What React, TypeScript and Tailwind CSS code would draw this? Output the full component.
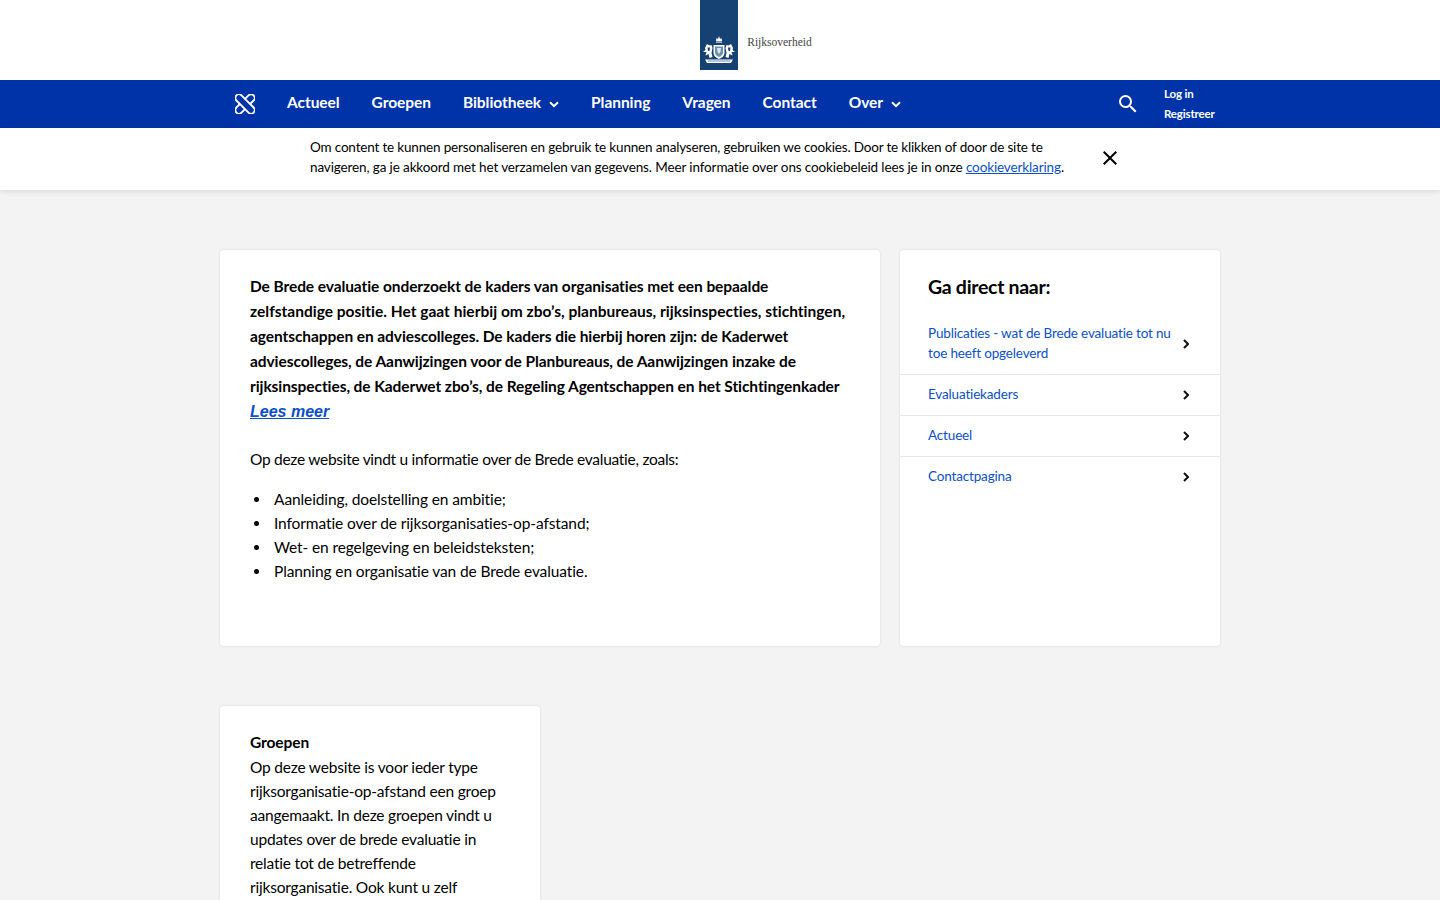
import { MdSearch, MdClose } from "react-icons/md";

const NAV = [
  { label: "Actueel" },
  { label: "Groepen" },
  { label: "Bibliotheek", caret: true },
  { label: "Planning" },
  { label: "Vragen" },
  { label: "Contact" },
  { label: "Over", caret: true },
];

const LINKS = [
  ["Publicaties - wat de Brede evaluatie tot nu", "toe heeft opgeleverd"],
  ["Evaluatiekaders"],
  ["Actueel"],
  ["Contactpagina"],
];

const INTRO = [
  "De Brede evaluatie onderzoekt de kaders van organisaties met een bepaalde",
  "zelfstandige positie. Het gaat hierbij om zbo’s, planbureaus, rijksinspecties, stichtingen,",
  "agentschappen en adviescolleges. De kaders die hierbij horen zijn: de Kaderwet",
  "adviescolleges, de Aanwijzingen voor de Planbureaus, de Aanwijzingen inzake de",
  "rijksinspecties, de Kaderwet zbo’s, de Regeling Agentschappen en het Stichtingenkader",
];

const BULLETS = [
  "Aanleiding, doelstelling en ambitie;",
  "Informatie over de rijksorganisaties-op-afstand;",
  "Wet- en regelgeving en beleidsteksten;",
  "Planning en organisatie van de Brede evaluatie.",
];

const GROEPEN = [
  "Op deze website is voor ieder type",
  "rijksorganisatie-op-afstand een groep",
  "aangemaakt. In deze groepen vindt u",
  "updates over de brede evaluatie in",
  "relatie tot de betreffende",
  "rijksorganisatie. Ook kunt u zelf",
];

function Logo() {
  return (
    <div className="flex items-end">
      <div className="w-[38px] h-[70px] bg-[#154273] flex items-end justify-center pb-[6px]">
        <svg width="34" height="29" viewBox="0 0 34 29" fill="#fff">
          {/* crown */}
          <path d="M14 6 L14.5 3 L16 4 L17 1 L18 4 L19.5 3 L20 6 Z" />
          <rect x="14" y="6.6" width="6" height="1" />
          {/* shield */}
          <path d="M11.5 10 H22.5 V18 C22.5 21 20 23 17 24 C14 23 11.5 21 11.5 18 Z" />
          <path d="M13 11.5 H21 V17.5 C21 19.8 19 21 17 22 C15 21 13 19.8 13 17.5 Z" fill="#6f8fb0" />
          <path d="M15 13 L19 13 L18.4 17 L17 19 L15.6 17 Z" fill="#dfe7ef" />
          {/* lions */}
          <path d="M3 13 L5 9 L7.5 10.5 L9.5 10 L10.5 13 L9.5 18 L10.5 22 L7.5 23 L6.5 19 L3.5 20.5 L4.5 17 L1 17 L3.5 15 Z" />
          <path d="M5.5 12.5 L8 12.5 L7.5 16 L6 16 Z" fill="#154273" />
          <path d="M31 13 L29 9 L26.5 10.5 L24.5 10 L23.5 13 L24.5 18 L23.5 22 L26.5 23 L27.5 19 L30.5 20.5 L29.5 17 L33 17 L30.5 15 Z" />
          <path d="M28.5 12.5 L26 12.5 L26.5 16 L28 16 Z" fill="#154273" />
          {/* ribbon */}
          <path d="M3 24.5 H31 L29 28 H5 Z" />
          <path d="M6 26 H28" stroke="#154273" strokeWidth="0.6" />
        </svg>
      </div>
      <span className="ml-[9px] mb-[21px] text-[11.5px] leading-[14px] text-[#444] whitespace-nowrap font-['Liberation_Serif',serif]">
        Rijksoverheid
      </span>
    </div>
  );
}

// two rounded bands, one passing over the other
function NavMark() {
  return (
    <svg width="20" height="20" viewBox="0 0 20 20" fill="#0033a8" stroke="#fff" strokeWidth="1.8" strokeLinejoin="round">
      <path d="M13.5 1.4 L1.4 13.5 A3.6 3.6 0 0 0 6.5 18.6 L18.6 6.5 A3.6 3.6 0 0 0 13.5 1.4 Z" />
      <path d="M6.5 1.4 L18.6 13.5 A3.6 3.6 0 0 1 13.5 18.6 L1.4 6.5 A3.6 3.6 0 0 1 6.5 1.4 Z" />
    </svg>
  );
}

function Caret() {
  return (
    <svg width="10" height="7" viewBox="0 0 10 7" fill="none" stroke="#fff" strokeWidth="2" className="ml-[8px] mt-[3px]">
      <path d="M1 1.2 L5 5.2 L9 1.2" />
    </svg>
  );
}

function Chevron() {
  return (
    <svg width="6" height="10" viewBox="0 0 6 10" fill="none" stroke="#111" strokeWidth="2" className="shrink-0 mt-[2px]">
      <path d="M1 1 L5 5 L1 9" />
    </svg>
  );
}

function Card({ className, children }: { className: string; children: React.ReactNode }) {
  return (
    <div className={`bg-white rounded-[4px] shadow-[0_0_3px_rgba(0,0,0,0.1)] ${className}`}>
      {children}
    </div>
  );
}

export default function App() {
  return (
    <div className="h-[900px] overflow-hidden bg-[#f3f3f3] text-black font-['Lato',sans-serif] whitespace-nowrap">
      <header className="h-[80px] bg-white flex justify-center">
        <div className="ml-[72px] h-[70px]">
          <Logo />
        </div>
      </header>

      <nav className="h-[48px] bg-[#0033a8] text-white">
        <div className="w-[1000px] mx-auto h-full flex items-center pl-[15px]">
          <NavMark />
          <ul className="flex items-center gap-8 ml-[32px] -mt-[2px] text-[15.5px] font-bold tracking-[-0.05px]">
            {NAV.map((n) => (
              <li key={n.label} className="flex items-center">
                {n.label}
                {n.caret && <Caret />}
              </li>
            ))}
          </ul>
          <div className="ml-auto flex items-center">
            <MdSearch size={24} className="mr-[24px]" />
            <div className="w-[56px] text-[11.5px] leading-[20px] font-bold tracking-[-0.15px]">
              <div>Log in</div>
              <div>Registreer</div>
            </div>
          </div>
        </div>
      </nav>

      <div className="h-[62px] bg-white shadow-[0_1px_6px_rgba(0,0,0,0.12)] flex items-center relative">
        <div className="w-[1000px] mx-auto flex items-center pl-[90px] -mt-[2px]">
          <p className="text-[13.5px] leading-[20px] w-[770px] -mt-[2px] tracking-[-0.17px]">
            Om content te kunnen personaliseren en gebruik te kunnen analyseren, gebruiken we cookies. Door te klikken of door de site te
            <br />
            <span className="tracking-[-0.125px]">
              navigeren, ga je akkoord met het verzamelen van gegevens. Meer informatie over ons cookiebeleid lees je in onze{" "}
              <a className="text-[#0b4fc9] underline">cookieverklaring</a>.
            </span>
          </p>
          <MdClose size={24} className="ml-[18px] -mt-[1px]" />
        </div>
      </div>

      <main className="w-[1000px] mx-auto pt-[60px]">
        <div className="flex gap-[20px]">
          <Card className="w-[660px] h-[396px] pt-[24px] px-[30px]">
            <div className="text-[15.5px] leading-[25px] font-bold tracking-[-0.08px]">
              {INTRO.map((l, i) => (
                <div key={l} className={i === 1 ? "tracking-[0.01px]" : ""}>
                  {l}
                </div>
              ))}
            </div>
            <a className="block text-[16px] leading-[25px] font-bold italic underline text-[#0b4fc9] font-['Liberation_Sans',sans-serif]">
              Lees meer
            </a>
            <p className="mt-[23px] text-[15.5px] leading-[24px] tracking-[-0.28px]">
              Op deze website vindt u informatie over de Brede evaluatie, zoals:
            </p>
            <ul className="mt-[16px] text-[15.5px] leading-[24px] tracking-[-0.11px]">
              {BULLETS.map((b) => (
                <li key={b} className="flex items-center">
                  <span className="w-[5px] h-[5px] rounded-full bg-black ml-[4px] mr-[15px]" />
                  {b}
                </li>
              ))}
            </ul>
          </Card>

          <Card className="w-[320px] h-[396px] pt-[24px]">
            <h2 className="px-[28px] text-[19.5px] leading-[26px] font-bold tracking-[-0.3px]">Ga direct naar:</h2>
            <div className="mt-[14px]">
              {LINKS.map((l, i) => (
                <div
                  key={l[0]}
                  className={`flex items-center justify-between pl-[28px] pr-[31px] pt-[9px] pb-[11px] ${i < 3 ? "border-b border-[#e8e8e8]" : ""}`}
                >
                  <div className="text-[13.5px] leading-[20px] text-[#0b4fc9] tracking-[-0.16px]">
                    {l.map((t) => (
                      <div key={t}>{t}</div>
                    ))}
                  </div>
                  <Chevron />
                </div>
              ))}
            </div>
          </Card>
        </div>

        <Card className="w-[320px] h-[300px] mt-[60px] pt-[24px] px-[30px]">
          <h3 className="text-[15.5px] leading-[25px] font-bold tracking-[-0.08px]">Groepen</h3>
          <div className="text-[15.5px] leading-[24px] tracking-[-0.2px]">
            {GROEPEN.map((l) => (
              <div key={l}>{l}</div>
            ))}
          </div>
        </Card>
      </main>
    </div>
  );
}
